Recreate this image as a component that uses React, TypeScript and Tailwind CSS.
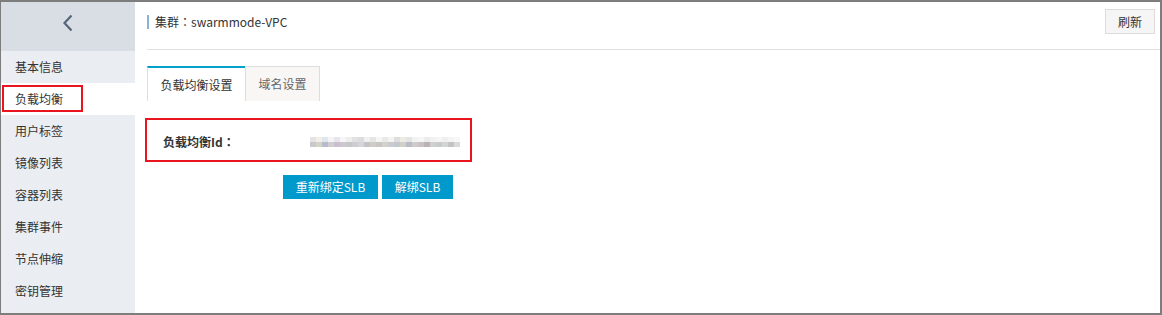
import React from "react";

const menu = ["基本信息", "负载均衡", "用户标签", "镜像列表", "容器列表", "集群事件", "节点伸缩", "密钥管理"];

// pixelated (blurred) id value
const mosaicTop = ["#e4e4e6", "#f2efe8", "#dfe6ee", "#f4f4f4", "#e8e4ee", "#f6f6f6", "#eeeeee", "#e2e2e2", "#dcdcdc", "#f0f0f0", "#e6e6e6", "#f5f5f5", "#eaeaea", "#f3f3f3", "#dedede", "#eeeae4", "#e4e4e4", "#f2f2f2", "#f6f6f6", "#ececec", "#f1f1f1", "#f5f5f5", "#efefef", "#f4f4f4", "#f7f7f7"];
const mosaicBottom = ["#c9c9cb", "#d5d2c8", "#b6bccc", "#d0cdd2", "#c8c0cc", "#cfc6d2", "#c4c8c8", "#ccccd2", "#d6d6d6", "#c0c6c8", "#d2ccc6", "#c6c6c6", "#d4d0ca", "#c8ccd0", "#c4c8cc", "#d0d0c8", "#b8bcc6", "#cccccc", "#c8c2c2", "#bcb2b4", "#d0d0d0", "#c6cccc", "#d4d4d4", "#c0c4c4", "#dadada"];

// full-width colon, centred like the original font draws it
const Colon = () => <span style={{ fontFamily: '"Noto Sans CJK TC", sans-serif' }}>：</span>;

export default function App() {
  return (
    <div
      className="w-[1162px] h-[315px] flex border-[#7d7d7d] border-t-2 border-r-2 border-b-2 border-l bg-white text-[12px] text-[#333]"
      style={{ fontFamily: '"Microsoft YaHei", "Noto Sans CJK SC", sans-serif' }}
    >
      {/* Sidebar */}
      <aside className="w-[134px] shrink-0 bg-[#eaedf1] flex flex-col">
        <div className="h-[49px] bg-[#d9dee4] flex items-center justify-center">
          <svg width="14" height="18" viewBox="0 0 14 18" className="-mt-[7px]">
            <polyline points="10.5,1.5 3.5,9 10.5,16.5" fill="none" stroke="#55657a" strokeWidth="2.2" />
          </svg>
        </div>
        {menu.map((m) => (
          <div
            key={m}
            className={`relative h-[32px] flex items-center pl-[14px] ${m === "负载均衡" ? "bg-white" : ""}`}
          >
            {m}
            {m === "负载均衡" && (
              <div className="absolute left-[1px] top-[2px] w-[81px] h-[27px] border-2 border-[#e8141e]" />
            )}
          </div>
        ))}
      </aside>

      {/* Main */}
      <main className="flex-1 pl-[12px] flex flex-col">
        <div className="h-[48px] shrink-0 border-b border-[#e1e1e1] flex items-center justify-between pr-[5px]">
          <div className="flex items-center -mt-[8px]">
            <span className="w-[2px] h-[14px] bg-[#88b4dc] mr-[6px]" />
            <span>
              集群<Colon />swarmmode-VPC
            </span>
          </div>
          <button className="w-[50px] h-[25px] -mt-[8px] bg-[#f5f5f5] border border-[#dcdcdc] text-[#333] flex items-center justify-center">
            刷新
          </button>
        </div>

        {/* Tabs */}
        <div className="flex mt-[16px] h-[35px]">
          <div className="w-[98px] border-t-2 border-t-[#00a2ca] border-l border-[#dddddd] bg-white flex items-center justify-center">
            负载均衡设置
          </div>
          <div className="w-[75px] border border-[#dddddd] border-b-0 bg-[#f8f7f6] text-[#666] flex items-center justify-center">
            域名设置
          </div>
        </div>

        {/* Id row */}
        <div className="mt-[17px] -ml-[2px] w-[327px] h-[44px] border-2 border-[#e8141e] flex items-center pl-[16px]">
          <span className="font-bold w-[147px] mt-[4px]">
            负载均衡Id<Colon />
          </span>
          <div className="flex flex-col mt-[4px]">
            <div className="flex">
              {mosaicTop.map((c, i) => (
                <span key={i} className="w-[6px] h-[5px]" style={{ backgroundColor: c }} />
              ))}
            </div>
            <div className="flex">
              {mosaicBottom.map((c, i) => (
                <span key={i} className="w-[6px] h-[5px]" style={{ backgroundColor: c }} />
              ))}
            </div>
          </div>
        </div>

        {/* Buttons */}
        <div className="flex gap-[4px] mt-[13px] ml-[136px]">
          <button className="w-[95px] h-[24px] bg-[#0099cc] text-white flex items-center justify-center">
            重新绑定SLB
          </button>
          <button className="w-[71px] h-[24px] bg-[#0099cc] text-white flex items-center justify-center">
            解绑SLB
          </button>
        </div>
      </main>
    </div>
  );
}
